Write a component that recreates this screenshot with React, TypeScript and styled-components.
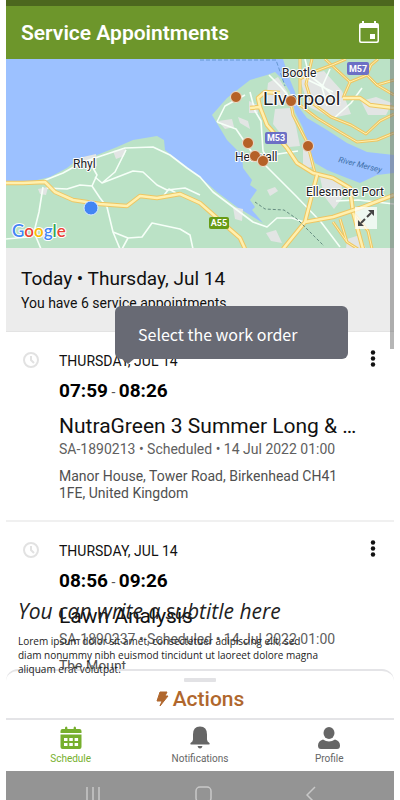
import React from "react";
import styled, { createGlobalStyle } from "styled-components";

const GlobalStyle = createGlobalStyle`
  * { box-sizing: border-box; }
  body { margin: 0; background: #fff; font-family: Roboto, sans-serif; color: #111; }
  button { font: inherit; color: inherit; border: 0; background: none; padding: 0; cursor: pointer; }
  h1, h2, h3, p { margin: 0; font-weight: 400; }
`;

const Screen = styled.main`
  position: relative;
  display: flex;
  flex-direction: column;
  height: 100vh;
  margin: 0 6px;
  overflow: hidden;
`;

const StatusStrip = styled.div`
  flex: none;
  height: 6px;
  background: #4c671e;
`;

const Header = styled.header`
  flex: none;
  display: flex;
  align-items: center;
  justify-content: space-between;
  height: 53px;
  padding: 0 14px 0 15px;
  background: #6d962b;
  color: #fff;
`;

const Title = styled.h1`
  font-size: 21px;
  line-height: 24px;
  font-weight: 600;
`;

const IconButton = styled.button`
  display: flex;
  svg { display: block; }
`;

const MapPanel = styled.section`
  position: relative;
  flex: none;
  height: 189px;
  background: #bbe2c6;
  overflow: hidden;
  svg { display: block; width: 100%; height: 100%; }
`;

const ExpandButton = styled.button`
  position: absolute;
  right: 17px;
  bottom: 19px;
  width: 22px;
  height: 22px;
  background: rgba(255, 255, 255, 0.75);
  svg { width: 22px; height: 22px; }
`;

const DayHeader = styled.section`
  flex: none;
  height: 84px;
  padding: 19px 15px;
  background: #ececec;
  border-bottom: 1px solid #e3e3e3;
`;

const DayTitle = styled.h2`
  font-size: 19px;
  line-height: 24px;
`;

const DayNote = styled.p`
  font-size: 14px;
  line-height: 24px;
`;

const List = styled.ul`
  flex: 1;
  min-height: 0;
  margin: 0;
  padding: 0;
  list-style: none;
`;

const Card = styled.li`
  display: grid;
  grid-template-columns: 30px 1fr 14px;
  column-gap: 8px;
  height: 190px;
  padding: 18px 14px 0 15px;
  border-bottom: 2px solid #f0f0f0;
`;

const CardIcon = styled.div`
  padding-top: 1px;
  svg { display: block; }
`;

const CardBody = styled.div`
  min-width: 0;
`;

const CardDate = styled.p`
  font-size: 14px;
  line-height: 22px;
`;

const CardTime = styled.p`
  margin-top: 7px;
  font-size: 19px;
  line-height: 24px;
  font-weight: 700;
  color: #000;
  span { font-size: 14px; font-weight: 400; color: #555; }
`;

const CardTitle = styled.h3`
  margin: 8px 0 0;
  font-size: 21px;
  line-height: 28px;
`;

const CardMeta = styled.p`
  font-size: 14px;
  line-height: 18px;
  color: #606060;
`;

const CardAddress = styled.p`
  margin-top: 10px;
  font-size: 14px;
  line-height: 17px;
  color: #505050;
`;

const MoreButton = styled(IconButton)`
  align-self: start;
  justify-content: center;
`;

const Sheet = styled.section`
  flex: none;
  display: flex;
  flex-direction: column;
  align-items: center;
  height: 51px;
  padding-top: 7px;
  border: solid #e4e4e7;
  border-width: 2px 0;
  border-radius: 12px 12px 0 0;
  background: #fff;
`;

const Grip = styled.div`
  width: 32px;
  height: 4px;
  border-radius: 1px;
  background: #e2e2e5;
`;

const ActionsButton = styled.button`
  display: flex;
  align-items: center;
  gap: 4px;
  margin-top: 5px;
  font-size: 21px;
  line-height: 24px;
  font-weight: 500;
  color: #b0672d;
`;

const Tabs = styled.nav`
  flex: none;
  display: grid;
  grid-template-columns: repeat(3, 1fr);
  height: 51px;
  background: #fff;
`;

const Tab = styled.button<{ $active?: boolean }>`
  display: flex;
  flex-direction: column;
  align-items: center;
  padding-top: 6px;
  font-size: 10px;
  line-height: 14px;
  color: ${(p) => (p.$active ? "#76af2d" : "#666")};
  svg { display: block; width: 24px; height: 24px; margin-bottom: 2px; }
`;

const SystemBar = styled.footer`
  flex: none;
  display: flex;
  justify-content: space-between;
  height: 29px;
  padding: 15px 78px 0;
  background: #949494;
  overflow: hidden;
  svg { display: block; }
`;

const Tooltip = styled.div`
  position: absolute;
  top: 306px;
  left: 109px;
  right: 46px;
  padding: 16px 23px 13px;
  border-radius: 6px;
  background: #686a74;
  color: #fff;
  font-family: "Noto Sans CJK SC", sans-serif;
  font-size: 16px;
  line-height: 24px;

  &::after {
    content: "";
    position: absolute;
    top: 100%;
    left: 7px;
    border: solid transparent;
    border-width: 5px 6px 0;
    border-top-color: #686a74;
  }
`;

const Caption = styled.div`
  position: absolute;
  left: 12px;
  bottom: 124px;
  width: 304px;
  font-family: "Open Sans", sans-serif;
  color: #222;
`;

const Subtitle = styled.p`
  font-size: 21px;
  line-height: 28px;
  font-style: italic;
`;

const CaptionText = styled.p`
  margin-top: 9px;
  font-size: 10px;
  line-height: 14px;
`;

const Scrollbar = styled.div`
  position: absolute;
  top: 59px;
  right: 0;
  width: 4px;
  height: 290px;
  background: rgba(110, 110, 110, 0.5);
`;

const mainRoads = [
  "M0 124L17 124L39 123L49 133L67 141L94 145L121 147L134 137L151 139L174 135L194 144L211 159L234 179L239 190",
  "M244 49L254 48L252 39L259 33L274 34M254 48L261 66L281 89L291 104L307 114L327 119L344 129L347 153L357 190",
  "M311 116L299 163L277 190M299 163L327 158L354 149L388 136",
];

const sideRoads = [
  "M284 39L287 56L301 83L309 114",
  "M294 0L294 46L311 59L334 73L351 83L371 81L388 74",
  "M319 0L344 23L361 16L371 26L388 21M344 23L337 39",
  "M306 0L300 25L306 44L325 58L345 66L360 75L374 62L388 55",
  "M327 163L341 183M334 160L341 183L352 190M347 153L362 172L366 190",
  "M294 20L310 12L326 6L340 0M361 16L365 6L372 0M371 26L388 36",
];

const motorway = "M337 39L354 39L364 46L388 49";

const whiteRoads = [
  "M37 122L57 114L77 103L119 89L147 88L164 96L181 109L194 118L207 133L231 151L247 163L261 168L271 159L286 159L301 164",
  "M41 129L61 130L74 126L86 127L91 116L87 109M86 127L94 139L101 148L107 173L114 190",
  "M89 118L96 124L127 112L137 113L151 126L161 131L179 129L194 136M96 124L109 113L120 91",
  "M37 128L33 153L28 173L35 190M107 173L122 179L136 178L146 164L174 170L184 176L187 190M122 179L116 190M0 180L22 178M158 136L163 130L170 134",
  "M211 63L219 47L239 36M211 63L230 70L245 92L262 109L290 137L315 163L334 188",
  "M244 33L249 52L255 62L257 92L262 101M259 97L292 92M263 16L275 28L284 39",
  "M299 0L303 16L317 27L334 44M286 12L300 20L327 33M324 10L316 28L321 47M327 60L345 44L356 29",
  "M330 142L352 141L388 145",
];

const urban = "M77 98L90 95L91 107L82 111ZM107 92L120 90L118 97L110 100ZM32 130L42 128L40 136L34 135ZM212 62L226 60L228 68L219 70ZM262 24L272 18L282 34L276 47L260 42ZM243 42L251 46L252 54L243 54ZM232 58L242 62L244 70L234 64ZM269 50L284 49L290 67L294 87L283 88L274 74L267 65ZM297 90L304 94L306 108L297 110ZM293 18L318 12L336 32L345 55L326 59L303 48ZM314 118L335 121L337 138L328 150L318 137ZM261 131L269 128L272 132L264 137ZM227 148L237 150L236 162L229 160ZM260 174L270 171L276 184L265 182ZM341 180L354 176L360 190L340 190ZM355 42L370 38L386 44L380 56L362 56Z";

const water = "M0 0H277L282 16L289 33L291 46L301 59L321 71L341 84L361 93L388 96V114L371 116L354 124L341 119L321 111L309 104L304 93L297 69L289 53L284 33L277 21L269 13L261 16L244 21L221 39L206 56L221 81L236 96L237 109L246 121L244 126L251 131L244 141L249 148L246 151L257 164L231 148L211 133L194 118L174 103L159 91L158 81L151 77L127 81L111 88L91 96L71 101L61 109L44 118L27 122L0 123Z";

const pins: [number, number][] = [[230, 38], [285, 42], [242, 84], [249, 97], [257, 102], [302, 87]];

const RoadSet = ({ roads, width }: { roads: string[]; width: number }) => (
  <>
    {roads.map((d) => (
      <g key={d} fill="none" strokeLinejoin="round">
        <path d={d} stroke="#efc662" strokeWidth={width} />
        <path d={d} stroke="#fff0af" strokeWidth={width - 2} />
      </g>
    ))}
  </>
);

const MapDrawing = () => (
  <svg viewBox="0 0 388 189" preserveAspectRatio="xMidYMid slice" role="img" aria-label="Map of appointments">
    <rect width="388" height="189" fill="#bbe2c6" />
    <path d={water} fill="#9cc1ff" />
    <path d={urban} fill="#e2e5e4" />
    {whiteRoads.map((d) => <path key={d} d={d} fill="none" stroke="#f6fff8" strokeWidth="1.6" strokeLinejoin="round" />)}
    <RoadSet roads={sideRoads} width={3} />
    <RoadSet roads={[...mainRoads, motorway]} width={4.5} />
    <path d="M249 143L259 150L278 151L291 160L318 187" fill="none" stroke="#648b80" strokeDasharray="3 2" />
    <path d="M194 1H270L279 27" fill="none" stroke="#6597d1" strokeDasharray="4 2" />
    <g fontFamily="Roboto, sans-serif" fill="#202124" stroke="#fff" strokeWidth="2" paintOrder="stroke" strokeLinejoin="round">
      <text x="67" y="109" fontSize="12">Rhyl</text>
      <text x="276" y="18" fontSize="12">Bootle</text>
      <text x="257" y="46" fontSize="19">Liverpool</text>
      <text x="229" y="102" fontSize="12">Heswall</text>
      <text x="300" y="137" fontSize="12">Ellesmere Port</text>
    </g>
    <g fontFamily="Roboto, sans-serif" fontSize="9" fontWeight="700" fill="#fff" textAnchor="middle">
      <rect x="341" y="3" width="22" height="13" rx="2" fill="#6c70c5" /><text x="352" y="13">M57</text>
      <rect x="259" y="73" width="22" height="12" rx="2" fill="#6c70c5" /><text x="270" y="82">M53</text>
      <rect x="203" y="158" width="20" height="12" rx="2" fill="#679b16" /><text x="213" y="167">A55</text>
    </g>
    <text transform="translate(332 103) rotate(14)" fontFamily="Roboto, sans-serif" fontSize="8" fontStyle="italic" fill="#3d6fa9">River Mersey</text>
    {pins.map(([x, y]) => <circle key={`${x}-${y}`} cx={x} cy={y} r="5.500" fill="#b56127" stroke="#efdccb" strokeWidth="1" />)}
    <circle cx="85" cy="149" r="7" fill="#4285f4" stroke="#d9e8ff" strokeWidth="1" />
    <text x="6" y="178" fontFamily="Lato, sans-serif" fontSize="17" fontWeight="600" stroke="#fff" strokeWidth="2" paintOrder="stroke" strokeLinejoin="round">
      <tspan fill="#4285f4">G</tspan><tspan fill="#ea4335">o</tspan><tspan fill="#fbbc05">o</tspan><tspan fill="#4285f4">g</tspan><tspan fill="#34a853">l</tspan><tspan fill="#ea4335">e</tspan>
    </text>
  </svg>
);

const EventIcon = () => (
  <svg width="22" height="24" viewBox="0 0 22 24">
    <path fill="#fff" fillRule="evenodd" d="M4 0h2v2h10V0h2v2h1q2 0 2 2v16q0 2-2 2H3q-2 0-2-2V4q0-2 2-2h1zM2.500 7v12.500q0 1 1 1h15q1 0 1-1V7zM12 13h5v5h-5z" />
  </svg>
);

const ClockIcon = () => (
  <svg width="19" height="19" viewBox="0 0 19 19" fill="none" stroke="#e2e2e2" strokeWidth="2">
    <circle cx="10" cy="9" r="7" /><path d="M10 5v4l3 3" />
  </svg>
);

const MoreIcon = () => (
  <svg width="6" height="18" viewBox="0 0 6 18" fill="#111">
    <circle cx="3" cy="2.500" r="2.200" /><circle cx="3" cy="8.500" r="2.200" /><circle cx="3" cy="14.500" r="2.200" />
  </svg>
);

const BoltIcon = () => (
  <svg width="13" height="16" viewBox="0 0 13 16">
    <path d="M4 1h7L9 5h3L4 15l2-5H1z" fill="#b0672d" stroke="#b0672d" strokeLinejoin="round" />
  </svg>
);

const CalendarIcon = () => (
  <svg viewBox="0 0 24 24" fill="#76af2d">
    <path fillRule="evenodd" d="M1.500 7V5q0-2 2-2H6V2q0-1.500 1.200-1.500T8.400 2v1h6.200V2q0-1.500 1.200-1.500T17 2v1h3.500q2 0 2 2v2zM1.500 8.500h21V21q0 2-2 2h-17q-2 0-2-2zM5 12v3h3.500v-3zM10.300 12v3h3.500v-3zM15.600 12v3h3.500v-3zM5 17v3h3.500v-3zM10.300 17v3h3.500v-3zM15.600 17v3h3.500v-3z" />
  </svg>
);

const BellIcon = () => (
  <svg viewBox="0 0 24 24" fill="#666">
    <path d="M12 .5q7 0 7 8v5q0 2 2.500 3.500.8 1.500-.8 1.500H3.300q-1.600 0-.8-1.500Q5 15.500 5 13.500v-5q0-8 7-8zM9.500 20h5q-.7 2.500-2.500 2.500T9.500 20z" />
  </svg>
);

const PersonIcon = () => (
  <svg viewBox="0 0 24 24" fill="#666">
    <ellipse cx="12" cy="7" rx="5.500" ry="6" />
    <path d="M6 13.500q6 4 12 0 5 1.500 5 6 0 3.500-3 3.500H4q-3 0-3-3.500 0-4.500 5-6z" />
  </svg>
);

interface Appointment {
  start: string;
  end: string;
  title: string;
  code: string;
  address: string;
}

const appointments: Appointment[] = [
  { start: "07:59", end: "08:26", title: "NutraGreen 3 Summer Long & …", code: "SA-1890213", address: "Manor House, Tower Road, Birkenhead CH41 1FE, United Kingdom" },
  { start: "08:56", end: "09:26", title: "Lawn Analysis", code: "SA-1890237", address: "The Mount" },
];

export default function App() {
  return (
    <>
      <GlobalStyle />
      <Screen>
        <StatusStrip />
        <Header>
          <Title>Service Appointments</Title>
          <IconButton aria-label="Calendar"><EventIcon /></IconButton>
        </Header>
        <MapPanel>
          <MapDrawing />
          <ExpandButton aria-label="Expand map">
            <svg viewBox="0 0 22 22" fill="#444" stroke="#444" strokeWidth="2">
              <path d="M12 10L16 6M10 12L6 16" />
              <path stroke="none" d="M13 3h6v6zM3 13v6h6z" />
            </svg>
          </ExpandButton>
        </MapPanel>
        <DayHeader>
          <DayTitle>Today • Thursday, Jul 14</DayTitle>
          <DayNote>You have 6 service appointments</DayNote>
        </DayHeader>
        <List>
          {appointments.map((a) => (
            <Card key={a.code}>
              <CardIcon><ClockIcon /></CardIcon>
              <CardBody>
                <CardDate>THURSDAY, JUL 14</CardDate>
                <CardTime>{a.start}<span> - </span>{a.end}</CardTime>
                <CardTitle>{a.title}</CardTitle>
                <CardMeta>{a.code} • Scheduled • 14 Jul 2022 01:00</CardMeta>
                <CardAddress>{a.address}</CardAddress>
              </CardBody>
              <MoreButton aria-label="More options"><MoreIcon /></MoreButton>
            </Card>
          ))}
        </List>
        <Sheet>
          <Grip />
          <ActionsButton><BoltIcon />Actions</ActionsButton>
        </Sheet>
        <Tabs>
          <Tab $active aria-current="page"><CalendarIcon />Schedule</Tab>
          <Tab><BellIcon />Notifications</Tab>
          <Tab><PersonIcon />Profile</Tab>
        </Tabs>
        <SystemBar>
          <svg width="18" height="22" viewBox="0 0 18 22" stroke="#c8c8c8" strokeWidth="1.500"><path d="M3 1v20M9 1v20M15 1v20" /></svg>
          <svg width="18" height="18" viewBox="0 0 18 18" fill="none" stroke="#c8c8c8" strokeWidth="1.500"><rect x="1" y="1" width="15" height="15" rx="4" /></svg>
          <svg width="10" height="18" viewBox="0 0 10 18" fill="none" stroke="#c8c8c8" strokeWidth="1.500"><path d="M9 1L1 9l8 8" /></svg>
        </SystemBar>
        <Scrollbar />
        <Caption>
          <Subtitle>You can write a subtitle here</Subtitle>
          <CaptionText>Lorem ipsum dolor sit amet, consectetuer adipiscing elit, sed diam nonummy nibh euismod tincidunt ut laoreet dolore magna aliquam erat volutpat.</CaptionText>
        </Caption>
        <Tooltip role="tooltip">Select the work order</Tooltip>
      </Screen>
    </>
  );
}
